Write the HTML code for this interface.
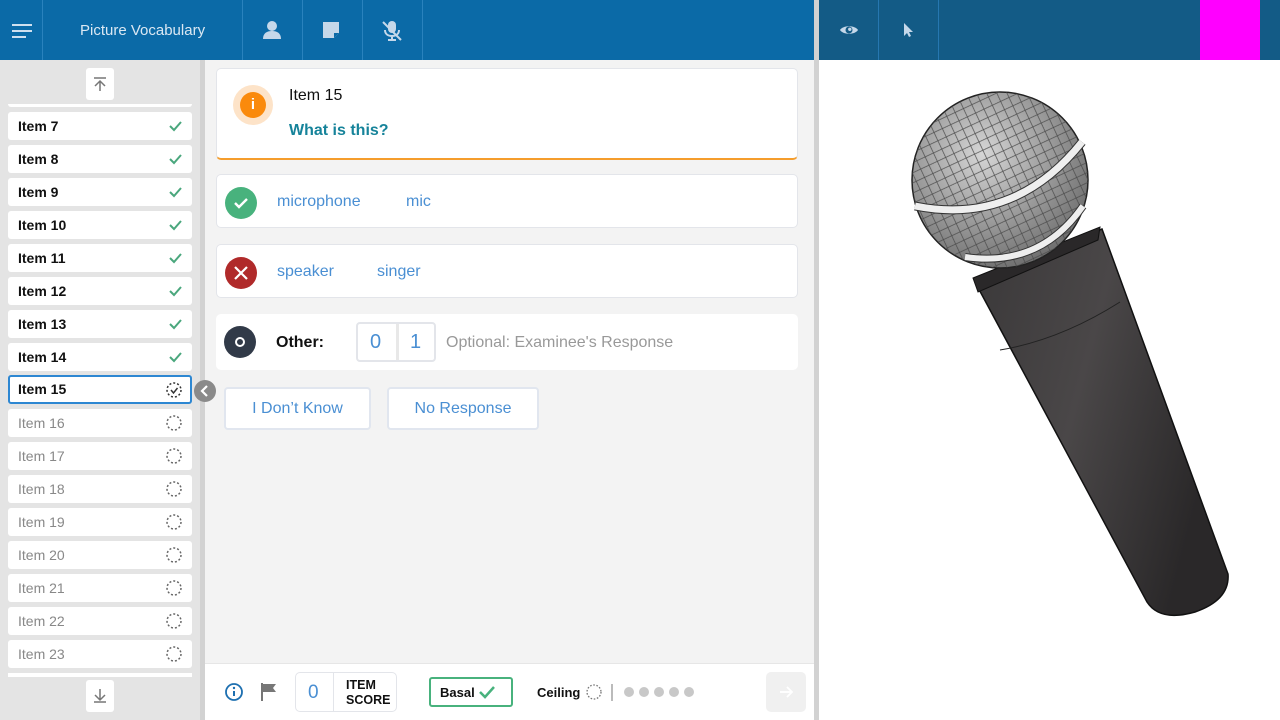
<!DOCTYPE html>
<html><head><meta charset="utf-8"><style>
*{box-sizing:border-box;margin:0;padding:0}
body{width:1280px;height:720px;overflow:hidden;font-family:"Liberation Sans",Arial,sans-serif;position:relative;background:#fff}
.abs{position:absolute}
.hdr{left:0;top:0;width:814px;height:60px;background:#0b6aa7}
.hdr2{left:819px;top:0;width:461px;height:60px;background:#135b86}
.sep{position:absolute;top:0;width:1px;height:60px;background:#2a82bd}
.sidebar{left:0;top:60px;width:200px;height:660px;background:#e4e4e4}
.scroll{left:200px;top:60px;width:5px;height:660px;background:#d2d2d2}
.main{left:205px;top:60px;width:609px;height:603px;background:#f3f3f3}
.div{left:814px;top:0;width:5px;height:720px;background:#d2d2d2}
.item{position:absolute;left:8px;width:184px;height:28px;background:#fff;border-radius:3px;font-size:14px;line-height:28px;padding-left:10px}
.item b{color:#111}
.item.g{color:#888}
.card{position:absolute;left:216px;width:582px;background:#fff;border:1px solid #e3e5ea;border-radius:5px}
.circ{position:absolute;width:32px;height:32px;border-radius:50%}
.blue{color:#4a8fd3;font-size:16px;position:absolute}
.btn{position:absolute;top:387px;height:43px;background:#fff;border:2px solid #e1e6ef;border-radius:4px;color:#4a8fd3;font-size:16px;text-align:center;line-height:39px}
</style></head><body>
<div class="abs hdr"></div>
<div class="sep" style="left:42px"></div><div class="sep" style="left:242px"></div><div class="sep" style="left:302px"></div><div class="sep" style="left:362px"></div><div class="sep" style="left:422px"></div>
<div class="abs" style="left:12px;top:24px;width:20px;height:2px;background:#cfe0ef"></div>
<div class="abs" style="left:12px;top:30px;width:20px;height:2px;background:#cfe0ef"></div>
<div class="abs" style="left:12px;top:36px;width:14px;height:2px;background:#cfe0ef"></div>
<div class="abs" style="left:80px;top:22px;color:#dbe8f3;font-size:15px">Picture Vocabulary</div>
<svg class="abs" style="left:262px;top:20px" width="20" height="20"><circle cx="10" cy="6" r="5" fill="#c5d8ea"/><path d="M1 19c0-6 4-8 9-8s9 2 9 8z" fill="#c5d8ea"/></svg>
<svg class="abs" style="left:323px;top:22px" width="18" height="18"><path d="M0 0h16v11l-5 5H0z" fill="#c5d8ea"/><path d="M11 16v-5h5" fill="#0b6aa7"/></svg>
<svg class="abs" style="left:380px;top:19px" width="24" height="24"><rect x="8" y="2" width="8" height="12" rx="4" fill="#c5d8ea"/><path d="M5 11c0 4 3 6 7 6s7-2 7-6M12 17v4M8 21h8" stroke="#c5d8ea" stroke-width="2" fill="none"/><path d="M3 3l18 18" stroke="#c5d8ea" stroke-width="2"/></svg>
<div class="abs hdr2"></div>
<div class="sep" style="left:878px;background:#2677b0"></div><div class="sep" style="left:938px;background:#2677b0"></div>
<svg class="abs" style="left:839px;top:23px" width="20" height="14"><path d="M1 7C4 2 16 2 19 7C16 12 4 12 1 7z" fill="#c5d8ea"/><circle cx="10" cy="7" r="3.5" fill="#135b86"/><circle cx="10.8" cy="6.3" r="1.7" fill="#c5d8ea"/></svg>
<svg class="abs" style="left:903px;top:22px" width="12" height="16"><path d="M1 1v13l3-3 2 4 2-1-2-4h4z" fill="#c5d8ea"/></svg>
<div class="abs" style="left:1200px;top:0;width:60px;height:60px;background:#ff00ff"></div>
<div class="abs div"></div>
<div class="abs sidebar"></div>
<div class="abs scroll"></div>
<div class="abs" style="left:86px;top:68px;width:28px;height:32px;background:#fff;border-radius:3px"></div>
<svg class="abs" style="left:92px;top:76px" width="16" height="16"><path d="M2 2h12M8 15V5M3 10l5-5 5 5" stroke="#777" stroke-width="1.5" fill="none"/></svg>
<div class="abs" style="left:8px;top:104px;width:184px;height:3px;background:#fff;border-radius:0 0 3px 3px"></div>
<div class="item" style="top:112px"><b>Item 7</b></div>
<div class="item" style="top:145px"><b>Item 8</b></div>
<div class="item" style="top:178px"><b>Item 9</b></div>
<div class="item" style="top:211px"><b>Item 10</b></div>
<div class="item" style="top:244px"><b>Item 11</b></div>
<div class="item" style="top:277px"><b>Item 12</b></div>
<div class="item" style="top:310px"><b>Item 13</b></div>
<div class="item" style="top:343px"><b>Item 14</b></div>
<div class="item" style="top:375px;height:29px;border:2px solid #2d87d2;line-height:25px;padding-left:8px"><b>Item 15</b></div>
<div class="item g" style="top:409px">Item 16</div>
<div class="item g" style="top:442px">Item 17</div>
<div class="item g" style="top:475px">Item 18</div>
<div class="item g" style="top:508px">Item 19</div>
<div class="item g" style="top:541px">Item 20</div>
<div class="item g" style="top:574px">Item 21</div>
<div class="item g" style="top:607px">Item 22</div>
<div class="item g" style="top:640px">Item 23</div>
<div class="abs" style="left:8px;top:673px;width:184px;height:4px;background:#fff"></div>
<svg class="abs" style="left:0;top:0" width="200" height="720">
<g stroke="#4aa77d" stroke-width="2" fill="none">
<path d="M170 126l4 4 7-8"/><path d="M170 159l4 4 7-8"/><path d="M170 192l4 4 7-8"/><path d="M170 225l4 4 7-8"/><path d="M170 258l4 4 7-8"/><path d="M170 291l4 4 7-8"/><path d="M170 324l4 4 7-8"/><path d="M170 357l4 4 7-8"/></g>
<g stroke="#666" stroke-width="1.5" fill="none" stroke-dasharray="2 2">
<circle cx="174" cy="423" r="7"/><circle cx="174" cy="456" r="7"/><circle cx="174" cy="489" r="7"/><circle cx="174" cy="522" r="7"/><circle cx="174" cy="555" r="7"/><circle cx="174" cy="588" r="7"/><circle cx="174" cy="621" r="7"/><circle cx="174" cy="654" r="7"/></g>
<circle cx="174" cy="390" r="7" stroke="#333" stroke-width="1.5" fill="none" stroke-dasharray="2 2"/>
<path d="M171 390l2.5 3 4-5" stroke="#333" stroke-width="1.5" fill="none"/>
</svg>
<div class="abs" style="left:86px;top:680px;width:28px;height:32px;background:#fff;border-radius:3px"></div>
<svg class="abs" style="left:92px;top:688px" width="16" height="16"><path d="M2 14h12M8 1v11M3 7l5 5 5-5" stroke="#777" stroke-width="1.5" fill="none"/></svg>
<div class="abs main"></div>
<svg class="abs" style="left:193px;top:379px" width="24" height="24"><circle cx="12" cy="12" r="11" fill="#8a8a8a"/><path d="M14 7l-5 5 5 5" stroke="#fff" stroke-width="2.2" fill="none"/></svg>
<div class="card" style="top:68px;height:92px;border-bottom:2px solid #f59d2c"></div>
<div class="circ" style="left:233px;top:85px;width:40px;height:40px;background:#fde3c8"></div>
<div class="circ" style="left:240px;top:92px;width:26px;height:26px;background:#fa8a0c;color:#fff;font-weight:bold;text-align:center;line-height:26px;font-size:15px">i</div>
<div class="abs" style="left:289px;top:87px;font-size:16px;color:#111">Item 15</div>
<div class="abs" style="left:289px;top:122px;font-size:16px;color:#16839a;font-weight:bold">What is this?</div>
<div class="card" style="top:174px;height:54px"></div>
<div class="circ" style="left:225px;top:187px;background:#48b27d"></div>
<svg class="abs" style="left:225px;top:187px" width="32" height="32"><path d="M10 16l4 4 8-8" stroke="#fff" stroke-width="2.4" fill="none"/></svg>
<div class="blue" style="left:277px;top:193px">microphone</div>
<div class="blue" style="left:406px;top:193px">mic</div>
<div class="card" style="top:244px;height:54px"></div>
<div class="circ" style="left:225px;top:257px;background:#b02a2a"></div>
<svg class="abs" style="left:225px;top:257px" width="32" height="32"><path d="M10 10l12 12M22 10L10 22" stroke="#fff" stroke-width="2.2"/></svg>
<div class="blue" style="left:277px;top:263px">speaker</div>
<div class="blue" style="left:377px;top:263px">singer</div>
<div class="card" style="top:314px;height:56px;border:none"></div>
<div class="circ" style="left:224px;top:326px;background:#313a48"></div>
<div class="circ" style="left:235px;top:337px;width:10px;height:10px;border:2px solid #fff"></div>
<div class="abs" style="left:276px;top:334px;font-size:16px;font-weight:bold;color:#111">Other:</div>
<div class="abs" style="left:356px;top:322px;width:80px;height:40px;border:2px solid #e3e5ea;border-radius:4px;background:#fff"></div>
<div class="abs" style="left:396px;top:324px;width:3px;height:36px;background:#e8e8e8"></div>
<div class="blue" style="left:370px;top:331px;font-size:20px">0</div>
<div class="blue" style="left:410px;top:331px;font-size:20px">1</div>
<div class="abs" style="left:446px;top:334px;font-size:16px;color:#999">Optional: Examinee's Response</div>
<div class="btn" style="left:224px;width:147px">I Don’t Know</div>
<div class="btn" style="left:387px;width:152px">No Response</div>
<div class="abs" style="left:205px;top:663px;width:609px;height:57px;background:#fff;border-top:1px solid #e6e6e6"></div>
<svg class="abs" style="left:224px;top:682px" width="20" height="20"><circle cx="10" cy="10" r="8" stroke="#1d6fb0" stroke-width="1.8" fill="none"/><path d="M10 9v5" stroke="#1d6fb0" stroke-width="2"/><circle cx="10" cy="6" r="1.2" fill="#1d6fb0"/></svg>
<svg class="abs" style="left:260px;top:682px" width="20" height="20"><path d="M2 1v18" stroke="#666" stroke-width="1.8"/><path d="M3 2h13l-3 4 3 4H3z" fill="#777"/></svg>
<div class="abs" style="left:295px;top:672px;width:102px;height:40px;border:1px solid #e3e5ea;border-radius:5px"></div>
<div class="abs" style="left:333px;top:673px;width:1px;height:38px;background:#e3e5ea"></div>
<div class="blue" style="left:308px;top:682px;font-size:19px">0</div>
<div class="abs" style="left:346px;top:678px;font-size:12.5px;font-weight:bold;line-height:15px;color:#111">ITEM<br>SCORE</div>
<div class="abs" style="left:429px;top:677px;width:84px;height:30px;border:2px solid #48b27d;border-radius:3px"></div>
<div class="abs" style="left:440px;top:685px;font-size:13px;font-weight:bold;color:#111">Basal</div>
<svg class="abs" style="left:477px;top:683px" width="20" height="18"><path d="M3 9l5 5 9-10" stroke="#48b27d" stroke-width="2.5" fill="none"/></svg>
<div class="abs" style="left:537px;top:685px;font-size:13px;font-weight:bold;color:#111">Ceiling</div>
<svg class="abs" style="left:584px;top:683px" width="110" height="20"><circle cx="10" cy="9" r="7" stroke="#777" stroke-width="1.3" fill="none" stroke-dasharray="1.6 1.6"/><path d="M28 1v17" stroke="#bbb" stroke-width="2"/><g fill="#c8c8c8"><circle cx="45" cy="9" r="5"/><circle cx="60" cy="9" r="5"/><circle cx="75" cy="9" r="5"/><circle cx="90" cy="9" r="5"/><circle cx="105" cy="9" r="5"/></g></svg>
<div class="abs" style="left:766px;top:672px;width:40px;height:40px;background:#f0f0f0;border-radius:5px"></div>
<svg class="abs" style="left:778px;top:684px" width="16" height="16"><path d="M2 8h12M9 3l5 5-5 5" stroke="#fff" stroke-width="1.8" fill="none"/></svg>
<svg class="abs" style="left:819px;top:60px" width="461" height="660" viewBox="819 60 461 660">
<defs>
<linearGradient id="hg" x1="0" y1="0" x2="1" y2="0.4"><stop offset="0" stop-color="#3a3839"/><stop offset="0.5" stop-color="#4a4748"/><stop offset="1" stop-color="#2a2829"/></linearGradient>
<radialGradient id="sg" cx="0.4" cy="0.35" r="0.7"><stop offset="0" stop-color="#d6d6d6"/><stop offset="1" stop-color="#6c6c6c"/></radialGradient>
<pattern id="mesh" width="13" height="13" patternUnits="userSpaceOnUse" patternTransform="rotate(20)"><path d="M0 0L13 13M13 0L0 13" stroke="#4a4a4a" stroke-width="0.7"/></pattern>
<clipPath id="hc"><circle cx="1000" cy="180" r="88"/></clipPath>
</defs>
<path d="M975 282L1102 229L1228 574Q1230 600 1195 612Q1160 622 1147 602Z" fill="url(#hg)" stroke="#111" stroke-width="1.5"/>
<path d="M1000 350Q1060 340 1120 302" stroke="#222" fill="none"/>
<path d="M973 278L1100 227L1098 240L978 292Z" fill="#2a2829" stroke="#111"/>
<circle cx="1000" cy="180" r="88" fill="url(#sg)" stroke="#222" stroke-width="1.5"/>
<circle cx="1000" cy="180" r="88" fill="url(#mesh)" clip-path="url(#hc)"/>
<path d="M965 257Q1040 268 1083 206" stroke="#333" stroke-width="8" fill="none"/>
<path d="M965 257Q1040 268 1083 206" stroke="#eee" stroke-width="6" fill="none"/>
<path d="M915 206Q1015 226 1082 142" stroke="#333" stroke-width="9" fill="none"/>
<path d="M915 206Q1015 226 1082 142" stroke="#efefef" stroke-width="7" fill="none"/>
</svg>
</body></html>
